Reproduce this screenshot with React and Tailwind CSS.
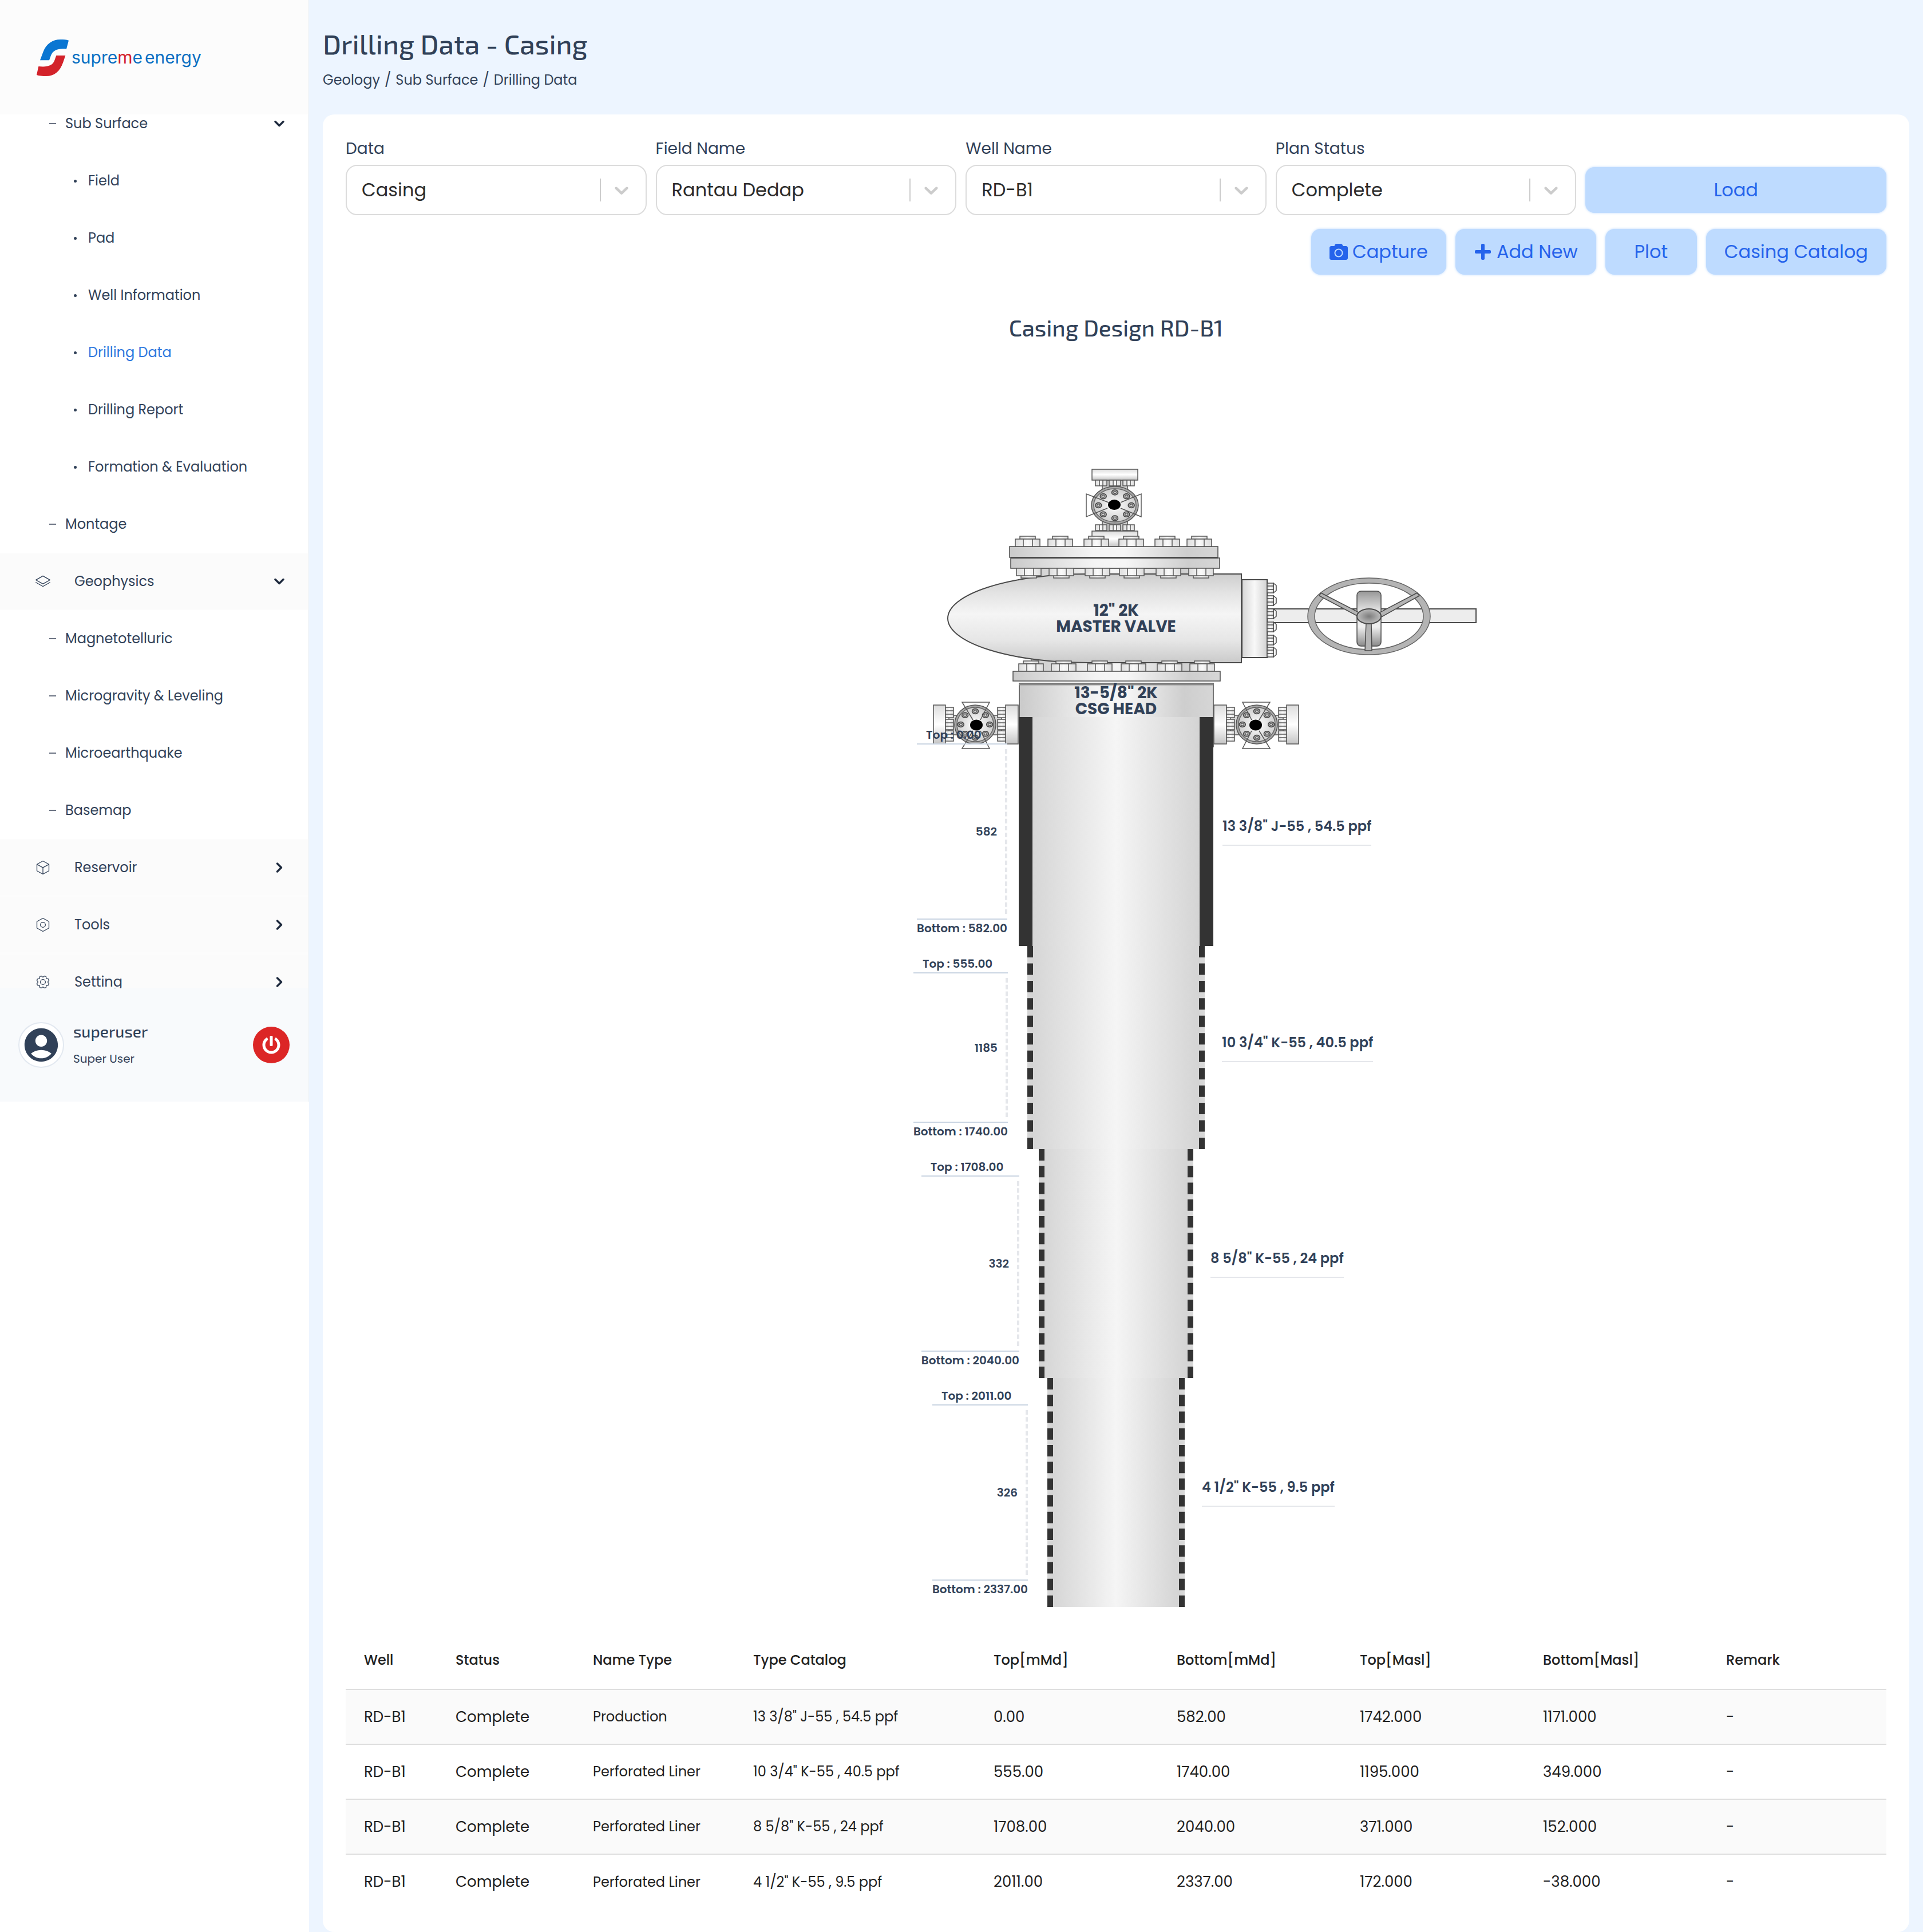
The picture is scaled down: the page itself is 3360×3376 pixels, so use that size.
import React, { useState } from "react";
import {
  PiStackSimpleLight,
  PiCubeLight,
  PiNutLight,
  PiGearLight,
} from "react-icons/pi";
import { FiChevronDown, FiChevronRight } from "react-icons/fi";
import { FaCamera, FaPlus, FaPowerOff } from "react-icons/fa";
import { MdAccountCircle } from "react-icons/md";

/* ---------- Menu ---------- */
const MENU = [
  { label: "Sub Surface", level: 1, open: true },
  { label: "Field", level: 2 },
  { label: "Pad", level: 2 },
  { label: "Well Information", level: 2 },
  { label: "Drilling Data", level: 2, active: true },
  { label: "Drilling Report", level: 2 },
  { label: "Formation & Evaluation", level: 2 },
  { label: "Montage", level: 1 },
  { label: "Geophysics", level: 0, icon: PiStackSimpleLight, open: true },
  { label: "Magnetotelluric", level: 1 },
  { label: "Microgravity & Leveling", level: 1 },
  { label: "Microearthquake", level: 1 },
  { label: "Basemap", level: 1 },
  { label: "Reservoir", level: 0, icon: PiCubeLight, open: false },
  { label: "Tools", level: 0, icon: PiNutLight, open: false },
  { label: "Setting", level: 0, icon: PiGearLight, open: false },
];

/* ---------- Filters ---------- */
const FILTERS = [
  { id: "data", label: "Data", options: ["Casing", "Survey", "Lithology"] },
  { id: "field", label: "Field Name", options: ["Rantau Dedap", "Muara Laboh"] },
  { id: "well", label: "Well Name", options: ["RD-B1", "RD-B2", "RD-C1"] },
  { id: "status", label: "Plan Status", options: ["Complete", "Plan"] },
];

/* ---------- Casing data ---------- */
const CASINGS = [
  {
    nameType: "Production",
    catalog: '13 3/8" J-55 , 54.5 ppf',
    top: "0.00",
    bottom: "582.00",
    topMasl: "1742.000",
    bottomMasl: "1171.000",
    length: "582",
    row: "h-[400px]",
    pipe: "w-[340px] border-x-24 border-solid",
    left: "mr-5",
    right: "ml-4",
  },
  {
    nameType: "Perforated Liner",
    catalog: '10 3/4" K-55 , 40.5 ppf',
    top: "555.00",
    bottom: "1740.00",
    topMasl: "1195.000",
    bottomMasl: "349.000",
    length: "1185",
    row: "h-[355px]",
    pipe: "w-[310px] border-x-10 border-dashed",
    left: "mr-[34px]",
    right: "ml-[30px]",
  },
  {
    nameType: "Perforated Liner",
    catalog: '8 5/8" K-55 , 24 ppf',
    top: "1708.00",
    bottom: "2040.00",
    topMasl: "371.000",
    bottomMasl: "152.000",
    length: "332",
    row: "h-[400px]",
    pipe: "w-[270px] border-x-10 border-dashed",
    left: "mr-[34px]",
    right: "ml-[30px]",
  },
  {
    nameType: "Perforated Liner",
    catalog: '4 1/2" K-55 , 9.5 ppf',
    top: "2011.00",
    bottom: "2337.00",
    topMasl: "172.000",
    bottomMasl: "-38.000",
    length: "326",
    row: "h-[400px]",
    pipe: "w-[240px] border-x-10 border-dashed",
    left: "mr-[34px]",
    right: "ml-[30px]",
  },
];

const COLUMNS = [
  { label: "Well", width: "w-[160px]" },
  { label: "Status", width: "w-[240px]" },
  { label: "Name Type", width: "w-[280px]" },
  { label: "Type Catalog", width: "w-[420px]" },
  { label: "Top[mMd]", width: "w-[320px]" },
  { label: "Bottom[mMd]", width: "w-[320px]" },
  { label: "Top[Masl]", width: "w-[320px]" },
  { label: "Bottom[Masl]", width: "w-[320px]" },
  { label: "Remark", width: "" },
];

function Logo() {
  return (
    <a href="#" className="flex items-center gap-1">
      <svg width="57" height="66" viewBox="0 0 171 198" aria-hidden="true">
        <path
          d="M18 115 L34 72 C50 28 85 6 125 6 C142 6 156 7 168 11 L156 56 C115 52 86 60 74 92 L66 115 Z"
          fill="#0a76d2"
        />
        <path
          d="M103 90 H151 L139 125 C122 175 92 197 50 198 C30 198 12 197 0 192 L10 147 C52 152 82 145 93 118 Z"
          fill="#d3222a"
        />
      </svg>
      <span className="flex gap-1 font-[Inter,sans-serif] text-[30px] leading-10 text-[#0a6fc2]">
        <span>
          supre<span className="text-[#d3222a]">m</span>e
        </span>
        <span>energy</span>
      </span>
    </a>
  );
}

function MenuItem({ item }) {
  const Icon = item.icon;
  const Caret = item.open ? FiChevronDown : FiChevronRight;

  return (
    <li
      className={
        item.level === 0
          ? "h-[100px] border-y-2 border-[#fcfcfc] bg-[#fbfbfb]"
          : "h-[100px]"
      }
    >
      <a
        href="#"
        className={
          "flex h-full items-center pr-9 text-[24px] " +
          (item.level === 0 ? "pl-[61px]" : item.level === 1 ? "pl-[86px]" : "pl-[129px]")
        }
      >
        {item.level === 0 && <Icon className="mr-[41px] size-7" />}
        {item.level === 1 && <span className="mr-4 h-0.5 w-3 bg-gray-500" />}
        {item.level === 2 && <span className="mr-5 size-[5px] rounded-full bg-slate-700" />}
        <span className={item.active ? "flex-1 text-[#2f78de]" : "flex-1"}>{item.label}</span>
        {item.open !== undefined && (
          <Caret className="size-7 text-slate-800" strokeWidth={3} />
        )}
      </a>
    </li>
  );
}

function Sidebar() {
  return (
    <aside className="flex w-[540px] shrink-0 flex-col border-r-2 border-slate-100 bg-white text-slate-700">
      <div className="flex h-[200px] items-center bg-[#fcfcfc] pl-16">
        <Logo />
      </div>

      <nav className="h-[1527px] overflow-hidden">
        <ul className="-mt-[34px]">
          {MENU.map((item) => (
            <MenuItem key={item.label} item={item} />
          ))}
        </ul>
      </nav>

      {/* -------- User -------- */}
      <div className="flex h-[198px] items-center bg-slate-50 px-8">
        <div className="flex size-20 items-center justify-center rounded-full border-2 border-slate-200 bg-white">
          <MdAccountCircle className="size-[70px] shrink-0 text-slate-700" />
        </div>
        <div className="ml-4 flex-1">
          <p className="font-['Exo_2',Roboto,sans-serif] text-[28px] leading-8 font-medium">superuser</p>
          <p className="mt-4 text-[20px] leading-8">Super User</p>
        </div>
        <button
          type="button"
          aria-label="Log out"
          className="flex size-16 items-center justify-center rounded-full bg-[#dc2626] text-white"
        >
          <FaPowerOff className="size-8" />
        </button>
      </div>
    </aside>
  );
}

function SelectField({ field }) {
  const [value, setValue] = useState(field.options[0]);

  return (
    <div className="flex flex-col">
      <label htmlFor={field.id} className="mb-2 text-[28px] leading-10 text-slate-700">
        {field.label}
      </label>
      <div className="relative">
        <select
          id={field.id}
          value={value}
          onChange={(e) => setValue(e.target.value)}
          className="h-[88px] w-full appearance-none rounded-[20px] border-2 border-[#dcdcdc] bg-white pr-28 pl-[26px] text-[32px] text-[#2b2b2b]"
        >
          {field.options.map((option) => (
            <option key={option}>{option}</option>
          ))}
        </select>
        <div className="pointer-events-none absolute inset-y-6 right-6 flex items-center gap-4 text-[#cccccc]">
          <span className="h-full w-0.5 bg-[#cccccc]" />
          <svg className="size-10" viewBox="0 0 20 20" fill="currentColor" aria-hidden="true">
            <path d="M4.516 7.548c0.436-0.446 1.043-0.481 1.576 0l3.908 3.747 3.908-3.747c0.533-0.481 1.141-0.446 1.574 0 0.436 0.445 0.408 1.197 0 1.615-0.406 0.418-4.695 4.502-4.695 4.502-0.217 0.223-0.502 0.335-0.787 0.335s-0.57-0.112-0.789-0.335c0 0-4.287-4.084-4.695-4.502s-0.436-1.17 0-1.615z" />
          </svg>
        </div>
      </div>
    </div>
  );
}

function Button({ className = "", children }) {
  return (
    <button
      type="button"
      className={
        "flex h-20 items-center justify-center gap-2 rounded-2xl bg-blue-200 px-8 text-[32px] text-[#2563eb] shadow-[0_0_4px_#bfdbfe] hover:bg-blue-300 " +
        className
      }
    >
      {children}
    </button>
  );
}

/* ---------- Wellhead drawing ---------- */

// hex nut with a stud end, seen from the side
function Nut({ x, y, flip }) {
  return (
    <g stroke="#555" strokeWidth="1.5" fill="url(#nut)">
      <rect x={x + 8} y={flip ? y + 12 : y - 5} width="27" height="5" />
      <rect x={x} y={y} width="43" height="13" />
      <path d={`M${x + 14} ${y} v13 M${x + 30} ${y} v13`} />
    </g>
  );
}

// round valve face with eight bolts and a bore
function ValveFace({ cx, cy, rx, ry }) {
  const angles = [0, 45, 90, 135, 180, 225, 270, 315];
  return (
    <g>
      <ellipse cx={cx} cy={cy} rx={rx} ry={ry} fill="#a8a8a8" stroke="#555" strokeWidth="1.5" />
      <ellipse cx={cx} cy={cy} rx={rx - 4} ry={ry - 4} fill="url(#face)" stroke="#666" strokeWidth="1.5" />
      {angles.map((a) => {
        const x = cx + Math.cos((a * Math.PI) / 180) * rx * 0.7;
        const y = cy + Math.sin((a * Math.PI) / 180) * ry * 0.68;
        return (
          <g key={a} stroke="#444" strokeWidth="1.5">
            <ellipse cx={x} cy={y} rx="5.5" ry="4.5" fill="#a5a5a5" />
            <ellipse cx={x} cy={y} rx="2.5" ry="2" fill="#ccc" strokeWidth="1" />
          </g>
        );
      })}
    </g>
  );
}

function SideValve() {
  return (
    <g stroke="#555" strokeWidth="1.5">
      <rect x="671" y="432" width="22" height="68" fill="url(#barrel)" />
      <rect x="798" y="432" width="21" height="68" fill="url(#barrel)" />
      <rect x="700" y="450" width="92" height="34" fill="#d8d8d8" />
      {[436, 457, 477].map((y) => (
        <g key={y} fill="url(#nut)">
          <rect x="693" y={y} width="14" height="18" />
          <rect x="784" y={y} width="14" height="18" />
          <path d={`M693 ${y + 6} h14 M693 ${y + 12} h14 M784 ${y + 6} h14 M784 ${y + 12} h14`} />
        </g>
      ))}
      <ValveFace cx={746} cy={466} rx={36} ry={34} />
      <path d="M737 458 L721 427 H769 L750 458 M737 477 L721 508 H769 L750 477" fill="none" />
      <ellipse cx="744" cy="467" rx="11" ry="9.5" fill="#000" stroke="none" />
    </g>
  );
}

function Wellhead() {
  return (
    <svg
      width="1000"
      height="453"
      viewBox="0 0 1000 453"
      className="overflow-visible"
      role="img"
      aria-label="Wellhead with master valve"
    >
      <defs>
        <linearGradient id="body" x1="0" y1="0" x2="0" y2="1">
          <stop offset="0" stopColor="#cecece" />
          <stop offset="0.2" stopColor="#e2e2e2" />
          <stop offset="0.45" stopColor="#f5f5f5" />
          <stop offset="0.75" stopColor="#e6e6e6" />
          <stop offset="1" stopColor="#cacaca" />
        </linearGradient>
        <linearGradient id="barrel" x1="0" y1="0" x2="0" y2="1">
          <stop offset="0" stopColor="#dcdcdc" />
          <stop offset="0.5" stopColor="#ffffff" />
          <stop offset="1" stopColor="#c4c4c4" />
        </linearGradient>
        <linearGradient id="flange" x1="0" y1="0" x2="1" y2="0">
          <stop offset="0" stopColor="#cacaca" />
          <stop offset="0.4" stopColor="#f4f4f4" />
          <stop offset="0.55" stopColor="#f6f6f6" />
          <stop offset="0.85" stopColor="#cecece" />
          <stop offset="1" stopColor="#d6d6d6" />
        </linearGradient>
        <linearGradient id="bonnet" x1="0" y1="0" x2="1" y2="0">
          <stop offset="0" stopColor="#d6d6d6" />
          <stop offset="0.5" stopColor="#f8f8f8" />
          <stop offset="1" stopColor="#d3d3d3" />
        </linearGradient>
        <linearGradient id="nut" x1="0" y1="0" x2="1" y2="0">
          <stop offset="0" stopColor="#dcdcdc" />
          <stop offset="0.5" stopColor="#fafafa" />
          <stop offset="1" stopColor="#dcdcdc" />
        </linearGradient>
        <linearGradient id="plate" x1="0" y1="0" x2="0" y2="1">
          <stop offset="0" stopColor="#979797" />
          <stop offset="0.35" stopColor="#e2e2e2" />
          <stop offset="0.65" stopColor="#f0f0f0" />
          <stop offset="1" stopColor="#8a8a8a" />
        </linearGradient>
        <radialGradient id="face">
          <stop offset="0" stopColor="#ffffff" />
          <stop offset="1" stopColor="#d0d0d0" />
        </radialGradient>
        <radialGradient id="hub">
          <stop offset="0" stopColor="#7c7c7c" />
          <stop offset="1" stopColor="#bdbdbd" />
        </radialGradient>
      </defs>

      {/* top valve */}
      <g stroke="#555" strokeWidth="1.5">
        <rect x="476" y="39" width="44" height="89" fill="#cfcfcf" />
        <rect x="458" y="20" width="80" height="19" fill="url(#barrel)" />
        <rect x="458" y="128" width="80" height="27" fill="url(#barrel)" />
        {[39, 117].map((y) =>
          [464, 488, 512].map((x) => (
            <g key={`${x}-${y}`} fill="url(#nut)">
              <rect x={x} y={y} width="20" height="10" />
              <path d={`M${x + 7} ${y} v10 M${x + 13} ${y} v10`} />
            </g>
          ))
        )}
        <ValveFace cx={498} cy={83} rx={41} ry={33} />
        <path d="M487 78 L448 63 V103 L485 88 M508 78 L544 63 V103 L508 88" fill="none" />
        <ellipse cx="497" cy="82" rx="11" ry="9" fill="#000" stroke="none" />
      </g>

      {/* necks behind the master valve */}
      <rect x="340" y="193" width="316" height="14" fill="url(#flange)" stroke="#666" />
      <rect x="352" y="349" width="300" height="24" fill="url(#flange)" stroke="#666" />

      {/* master valve */}
      <path
        d="M719 203 H450 A244 77.5 0 0 0 450 358 H719 Z"
        fill="url(#body)"
        stroke="#4a4a4a"
        strokeWidth="2"
      />
      <g stroke="#4a4a4a" strokeWidth="1.5">
        <rect x="314" y="155" width="364" height="19" fill="url(#flange)" />
        <rect x="316" y="175" width="365" height="18" fill="url(#flange)" />
        <path d="M316 174.5 H678" strokeWidth="3" />
      </g>
      {[324, 381, 444, 505, 568, 624].map((x) => (
        <Nut key={x} x={x} y={142} />
      ))}
      {[326, 383, 446, 506, 570, 627].map((x) => (
        <Nut key={x} x={x} y={193} flip />
      ))}

      {/* bonnet, stem and hand wheel */}
      <g stroke="#4a4a4a" strokeWidth="1.5">
        <rect x="764" y="264" width="365" height="24" fill="#ededed" strokeWidth="2" />
        <rect x="720" y="213" width="44" height="136" fill="url(#bonnet)" strokeWidth="2" />
        {[219, 241, 264, 287, 310, 331].map((y) => (
          <g key={y} fill="url(#nut)">
            <rect x="764" y={y} width="11" height="17" />
            <path d={`M775 ${y} l5 4 v9 l-5 4 Z`} />
            <path d={`M764 ${y + 5} h12 M764 ${y + 11} h12`} />
          </g>
        ))}
        <rect x="921" y="233" width="42" height="96" rx="7" fill="url(#plate)" />
        <path
          d="M835 277 a107 67 0 1 0 214 0 a107 67 0 1 0 -214 0 Z M847 277 a95 58 0 1 0 190 0 a95 58 0 1 0 -190 0 Z"
          fill="#b4b4b4"
          fillRule="evenodd"
          stroke="#666"
        />
        <path d="M858 236 L924 270 L921 276 L855 241 Z" fill="#b4b4b4" />
        <path d="M1026 236 L961 270 L964 278 L1030 241 Z" fill="#b4b4b4" />
        <path d="M937 288 H946 L947 337 H935 Z" fill="#b4b4b4" />
        <ellipse cx="942" cy="277" rx="21" ry="13" fill="url(#hub)" strokeWidth="2" />
      </g>

      {/* casing head */}
      {[330, 387, 450, 509, 572, 629].map((x) => (
        <Nut key={x} x={x} y={360} />
      ))}
      <g stroke="#4a4a4a" strokeWidth="1.5">
        <rect x="320" y="373" width="362" height="17" fill="url(#flange)" />
        <rect x="331" y="394" width="339" height="111" fill="url(#flange)" />
      </g>
      <path d="M331 396 H670" stroke="#8a8a8a" strokeWidth="3" />
      <SideValve />
      <g transform="translate(1000 0) scale(-1 1)">
        <SideValve />
      </g>

      <g className="fill-slate-700 text-[28px] font-bold" textAnchor="middle">
        <text x="500" y="276">12" 2K</text>
        <text x="500" y="304">MASTER VALVE</text>
        <text x="500" y="420">13-5/8" 2K</text>
        <text x="500" y="448">CSG HEAD</text>
      </g>
    </svg>
  );
}

function CasingSection({ casing }) {
  return (
    <div className={"relative flex w-full " + casing.row}>
      {/* depths */}
      <div className="flex flex-1 justify-end">
        <div className={"flex flex-col py-4 text-[20px] leading-[30px] font-semibold " + casing.left}>
          <p className="border-b-2 border-slate-300 pl-4">Top : {casing.top}</p>
          <div className="my-2 flex flex-1 items-center justify-end border-r-4 border-dashed border-gray-200 pr-[14px]">
            {casing.length}
          </div>
          <p className="border-t-2 border-slate-300">Bottom : {casing.bottom}</p>
        </div>
      </div>

      {/* pipe */}
      <div
        className={
          "border-[#333333] bg-linear-to-r from-[#d6d6d6] via-[#f5f5f5] to-[#d4d4d4] " + casing.pipe
        }
      />

      {/* catalog */}
      <div className="flex flex-1 items-center">
        <p className={"border-b-2 border-gray-200 pb-4 text-[24px] leading-8 font-semibold " + casing.right}>
          {casing.catalog}
        </p>
      </div>
    </div>
  );
}

function CasingTable() {
  return (
    <table className="mt-[42px] w-full table-fixed text-left text-[#212121]">
      <thead>
        <tr className="h-[102px] border-b-2 border-[#dedede] text-[24px]">
          {COLUMNS.map((col) => (
            <th key={col.label} className={"pl-8 font-medium " + col.width}>
              {col.label}
            </th>
          ))}
        </tr>
      </thead>
      <tbody>
        {CASINGS.map((c) => (
          <tr
            key={c.catalog}
            className="h-24 border-b-2 border-[#dedede] text-[26px] odd:bg-[#fafafa] last:border-b-0"
          >
            <td className="pl-8">RD-B1</td>
            <td className="pl-8">Complete</td>
            <td className="pl-8 text-[24px]">{c.nameType}</td>
            <td className="pl-8 text-[24px]">{c.catalog}</td>
            <td className="pl-8">{c.top}</td>
            <td className="pl-8">{c.bottom}</td>
            <td className="pl-8">{c.topMasl}</td>
            <td className="pl-8">{c.bottomMasl}</td>
            <td className="pl-8">-</td>
          </tr>
        ))}
      </tbody>
    </table>
  );
}

export default function App() {
  return (
    <div className="flex items-start bg-[#edf5ff] font-[Poppins,Inter,sans-serif]">
      <div className="self-stretch bg-white">
        <Sidebar />
      </div>

      <main className="min-w-0 flex-1 px-6 text-slate-700">
        {/* -------- Page header -------- */}
        <header className="h-[200px] pt-12">
          <h1 className="font-['Exo_2',Roboto,sans-serif] text-[48px] leading-14 font-medium">
            Drilling Data - Casing
          </h1>
          <nav className="mt-4 flex gap-2 text-[24px] leading-10">
            <a href="#">Geology</a>
            <span>/</span>
            <a href="#">Sub Surface</a>
            <span>/</span>
            <a href="#">Drilling Data</a>
          </nav>
        </header>

        <section className="rounded-[20px] bg-white p-10">
          {/* -------- Filters -------- */}
          <form className="grid grid-cols-5 items-end gap-4" onSubmit={(e) => e.preventDefault()}>
            {FILTERS.map((field) => (
              <SelectField key={field.id} field={field} />
            ))}
            <Button className="mb-1">Load</Button>
          </form>

          <div className="mt-6 flex justify-end gap-4">
            <Button>
              <FaCamera /> Capture
            </Button>
            <Button>
              <FaPlus /> Add New
            </Button>
            <Button className="w-[160px]">Plot</Button>
            <Button>Casing Catalog</Button>
          </div>

          {/* -------- Casing design -------- */}
          <h2 className="mt-[68px] text-center font-['Exo_2',Roboto,sans-serif] text-[40px] leading-12 font-medium">
            Casing Design RD-B1
          </h2>
          <div className="mt-[204px] flex flex-col items-center">
            <Wellhead />
            {CASINGS.map((casing) => (
              <CasingSection key={casing.catalog} casing={casing} />
            ))}
          </div>

          <CasingTable />
        </section>
      </main>
    </div>
  );
}
